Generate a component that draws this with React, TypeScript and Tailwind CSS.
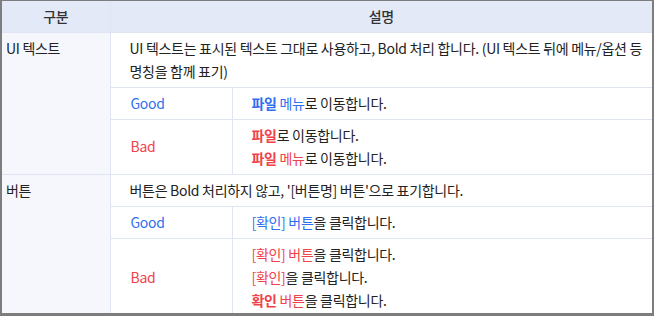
import React from 'react';

const Blue: React.FC<{ bold?: boolean; children: React.ReactNode }> = ({ bold, children }) => (
  <span className={`text-[#2f6ff0] ${bold ? 'font-bold' : ''}`}>{children}</span>
);

const Red: React.FC<{ bold?: boolean; children: React.ReactNode }> = ({ bold, children }) => (
  <span className={`text-[#f0424a] ${bold ? 'font-bold' : ''}`}>{children}</span>
);

const cell = 'border border-[#dfe5f2] align-top py-[4px] leading-[23px]';

export default function App() {
  return (
    <div
      className="h-[316px] w-[654px] bg-[#7d7d7d] pt-[1px] pl-[2px] pr-[2px] pb-[3px]"
      style={{ fontFamily: '"Noto Sans CJK KR", "Noto Sans", sans-serif' }}
    >
      <div className="h-full w-full overflow-hidden bg-white text-[14px] tracking-[-0.3px] text-[#222]">
        <table className="w-full border-collapse border-hidden table-fixed">
          <colgroup>
            <col className="w-[108px]" />
            <col className="w-[122px]" />
            <col />
          </colgroup>
          <thead>
            <tr className="bg-[#e3e9f6] h-[31px]">
              <th className="border border-[#dfe5f2] p-0 leading-[29px] font-medium text-[#333]">구분</th>
              <th colSpan={2} className="border border-[#dfe5f2] p-0 leading-[29px] font-medium text-[#333]">설명</th>
            </tr>
          </thead>
          <tbody>
            <tr>
              <td rowSpan={3} className={`${cell} bg-[#f5f7fc] pl-[4px]`}>UI 텍스트</td>
              <td colSpan={2} className={`${cell} pl-[19px] whitespace-nowrap`}>
                UI 텍스트는 표시된 텍스트 그대로 사용하고, Bold 처리 합니다. (UI 텍스트 뒤에 메뉴/옵션 등
                <br />
                명칭을 함께 표기)
              </td>
            </tr>
            <tr>
              <td className={`${cell} pl-[20px] text-[#2f6ff0]`}>Good</td>
              <td className={`${cell} pl-[19px]`}>
                <Blue bold>파일</Blue> <Blue>메뉴</Blue>로 이동합니다.
              </td>
            </tr>
            <tr>
              <td className={`${cell} !align-middle pl-[20px] text-[#f0424a]`}>Bad</td>
              <td className={`${cell} pl-[19px]`}>
                <Red bold>파일</Red>로 이동합니다.
                <br />
                <Red bold>파일</Red> <Red>메뉴</Red>로 이동합니다.
              </td>
            </tr>
            <tr>
              <td rowSpan={3} className={`${cell} bg-[#f5f7fc] pl-[4px]`}>버튼</td>
              <td colSpan={2} className={`${cell} pl-[19px]`}>
                버튼은 Bold 처리하지 않고, '[버튼명] 버튼'으로 표기합니다.
              </td>
            </tr>
            <tr>
              <td className={`${cell} pl-[20px] text-[#2f6ff0]`}>Good</td>
              <td className={`${cell} pl-[19px]`}>
                <Blue>[확인] 버튼</Blue>을 클릭합니다.
              </td>
            </tr>
            <tr>
              <td className={`${cell} !align-middle pl-[20px] text-[#f0424a]`}>Bad</td>
              <td className={`${cell} pl-[19px]`}>
                <Red>[확인] 버튼</Red>을 클릭합니다.
                <br />
                <Red>[확인]</Red>을 클릭합니다.
                <br />
                <Red bold>확인</Red> <Red>버튼</Red>을 클릭합니다.
              </td>
            </tr>
          </tbody>
        </table>
      </div>
    </div>
  );
}
